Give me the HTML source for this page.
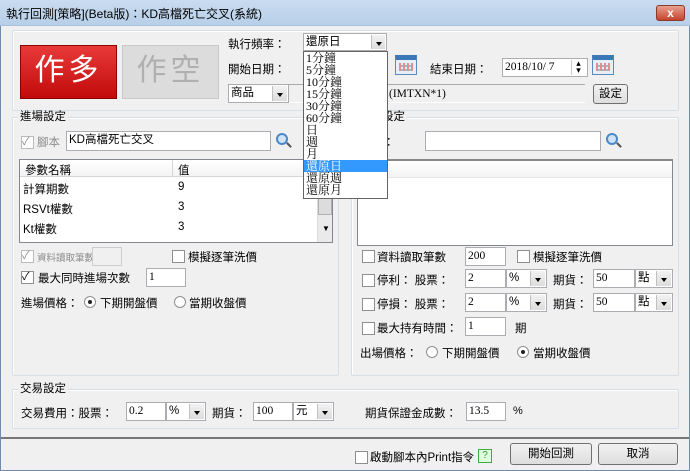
<!DOCTYPE html>
<html><head><meta charset="utf-8">
<style>
*{box-sizing:border-box;margin:0;padding:0}
body{width:690px;height:471px;overflow:hidden;background:#f0f0f0;font-family:"Liberation Sans","Noto Sans CJK TC",sans-serif;font-size:11.5px;color:#000;position:relative}
.a{position:absolute;white-space:nowrap}
.title{left:0;top:0;width:690px;height:26px;background:linear-gradient(#c9dcf0,#b7cfe8);border-bottom:1px solid #a8c0da}
.win{left:0;top:0;width:690px;height:471px;border:1px solid #6d8db0;border-top:none}
.grp{border:1px solid #d5dfe5;border-radius:2px;box-shadow:inset 1px 1px 0 #fff}
.gl{background:#f0f0f0;padding:0 2px;line-height:12px}
.in{background:#fff;border:1px solid #abadb3;height:19px;line-height:17px;padding-left:2px}
.cb{width:13px;height:13px;border:1px solid #8e8f8f;background:#fff}
.dd{position:absolute;right:1px;top:1px;width:15px;bottom:1px;background:linear-gradient(#f2f2f2,#dcdcdc);border-left:1px solid #c0c0c0}
.dd:after{content:"";position:absolute;left:4px;top:7px;border:3.5px solid transparent;border-top:4px solid #000}
.btn{border:1px solid #707070;border-radius:3px;background:linear-gradient(#f2f2f2,#dddddd);text-align:center}
.cal{width:22px;height:20px;background:#e8eef6;border:1px solid #5a8bc0;border-top:5px solid #3a78b8}
.cal:after{content:"";position:absolute;left:3px;top:3px;width:14px;height:8px;background:repeating-linear-gradient(90deg,#d66 0 2px,transparent 2px 4px),repeating-linear-gradient(0deg,#7ab 0 2px,transparent 2px 4px);opacity:.7}
.mag{width:12px;height:12px;border:2px solid #4a88c8;border-radius:50%;background:#cfe3f5}
.mag:after{content:"";position:absolute;left:8px;top:9px;width:6px;height:2px;background:#555;transform:rotate(45deg)}
.rd{width:12px;height:12px;border-radius:50%;border:1px solid #8e8f8f;background:#fff}
.rd.on:after{content:"";position:absolute;left:3px;top:3px;width:4px;height:4px;border-radius:50%;background:#222}
.gray{color:#8d8d8d}
</style></head><body>
<div class="a win"></div>
<div class="a title"></div>
<div class="a" style="left:6px;top:5px;font-size:12px">執行回測[策略](Beta版)：KD高檔死亡交叉(系統)</div>
<div class="a" style="left:656px;top:5px;width:29px;height:16px;border-radius:3px;background:linear-gradient(#e8a090,#c5442c);border:1px solid #8a3a2a;color:#fff;font-weight:bold;text-align:center;line-height:14px;font-size:12px">x</div>

<div class="a grp" style="left:12px;top:30px;width:667px;height:81px"></div>
<div class="a" style="left:20px;top:45px;width:97px;height:54px;background:linear-gradient(#e83a3a,#c20a0a);border:1px solid #8a0000;color:#fff;font-size:30px;line-height:50px;text-align:center;letter-spacing:4px">作多</div>
<div class="a" style="left:122px;top:45px;width:97px;height:54px;background:#dcdcdc;border:1px solid #c8c8c8;color:#b0b0b0;font-size:30px;line-height:50px;text-align:center;letter-spacing:4px">作空</div>
<div class="a" style="left:228px;top:36px">執行頻率：</div>
<div class="a in" style="left:303px;top:33px;width:84px;height:18px;line-height:16px">還原日<div class="dd" style="width:14px"></div></div>
<div class="a" style="left:228px;top:61px">開始日期：</div>
<div class="a cal" style="left:395px;top:55px"></div>
<div class="a" style="left:430px;top:61px">結束日期：</div>
<div class="a in" style="left:502px;top:58px;width:86px;font-family:'Liberation Serif',serif">2018/10/ 7<div class="a" style="right:2px;top:1px;width:14px;height:15px;border-left:1px solid #ccc;text-align:center;font-size:9px;line-height:7px">▴<br>▾</div></div>
<div class="a cal" style="left:592px;top:55px"></div>
<div class="a in" style="left:228px;top:84px;width:61px;height:19px;line-height:17px">商品<div class="dd"></div></div>
<div class="a" style="left:289px;top:84px;width:296px;height:19px;border-top:1px solid #aaa;border-bottom:1px solid #fff;padding-left:100px;line-height:18px;font-family:'Liberation Serif',serif">(IMTXN*1)</div>
<div class="a btn" style="left:593px;top:84px;width:35px;height:20px;line-height:18px">設定</div>

<div class="a grp" style="left:12px;top:117px;width:327px;height:259px"></div>
<div class="a gl" style="left:18px;top:111px">進場設定</div>
<div class="a cb" style="left:21px;top:136px;border-color:#bbb"></div><div class="a gray" style="left:22px;top:133px;font-size:11px">✓</div>
<div class="a gray" style="left:37px;top:134px">腳本</div>
<div class="a in" style="left:66px;top:131px;width:205px;height:20px">KD高檔死亡交叉</div>
<div class="a mag" style="left:276px;top:133px"></div>
<div class="a" style="left:19px;top:159px;width:314px;height:84px;background:#fff;border:1px solid #828790;overflow:hidden">
 <div class="a" style="left:0;top:0;width:297px;height:17px;border-bottom:1px solid #d5d5d5;background:linear-gradient(#fff,#f3f3f3)"></div>
 <div class="a" style="left:152px;top:0;width:1px;height:17px;background:#d5d5d5"></div>
 <div class="a" style="left:5px;top:2px">參數名稱</div><div class="a" style="left:158px;top:2px">值</div>
 <div class="a" style="left:3px;top:21px">計算期數</div><div class="a" style="left:158px;top:21px">9</div>
 <div class="a" style="left:3px;top:41px">RSVt權數</div><div class="a" style="left:158px;top:41px">3</div>
 <div class="a" style="left:3px;top:61px">Kt權數</div><div class="a" style="left:158px;top:61px">3</div>
 <div class="a" style="left:297px;top:0;width:16px;height:84px;background:#eaeaea;border-left:1px solid #ddd"></div>
 <div class="a" style="left:298px;top:25px;width:14px;height:30px;background:#dcdcdc;border:1px solid #b0b0b0"></div>
 <div class="a" style="left:302px;top:64px;font-size:8px">▼</div>
</div>
<div class="a cb" style="left:21px;top:250px;border-color:#bbb"></div><div class="a gray" style="left:22px;top:247px;font-size:11px">✓</div>
<div class="a gray" style="left:37px;top:250px;font-size:9.5px">資料讀取筆數</div>
<div class="a in" style="left:92px;top:247px;width:30px;background:#f0f0f0;border-color:#ccc"></div>
<div class="a cb" style="left:172px;top:250px"></div><div class="a" style="left:188px;top:249px">模擬逐筆洗價</div>
<div class="a cb" style="left:21px;top:271px"></div><div class="a" style="left:22px;top:268px;font-size:11px">✓</div>
<div class="a" style="left:38px;top:270px">最大同時進場次數</div>
<div class="a in" style="left:146px;top:268px;width:40px;font-family:'Liberation Serif',serif">1</div>
<div class="a" style="left:21px;top:295px">進場價格：</div>
<div class="a rd on" style="left:84px;top:296px"></div><div class="a" style="left:100px;top:295px">下期開盤價</div>
<div class="a rd" style="left:174px;top:296px"></div><div class="a" style="left:189px;top:295px">當期收盤價</div>

<div class="a grp" style="left:351px;top:117px;width:328px;height:259px"></div>
<div class="a gl" style="left:357px;top:111px">出場設定</div>
<div class="a" style="left:360px;top:134px">腳本：</div>
<div class="a in" style="left:425px;top:131px;width:176px;height:20px"></div>
<div class="a mag" style="left:606px;top:133px"></div>
<div class="a" style="left:357px;top:159px;width:316px;height:87px;background:#fff;border:1px solid #828790;border-top:2px solid #888">
 <div class="a" style="left:0;top:0;width:314px;height:17px;background:linear-gradient(#fff,#f3f3f3);border-bottom:1px solid #e5e5e5"></div>
</div>
<div class="a cb" style="left:362px;top:250px"></div><div class="a" style="left:377px;top:249px">資料讀取筆數</div>
<div class="a in" style="left:465px;top:247px;width:41px;font-family:'Liberation Serif',serif">200</div>
<div class="a cb" style="left:517px;top:250px"></div><div class="a" style="left:533px;top:249px">模擬逐筆洗價</div>
<div class="a cb" style="left:362px;top:274px"></div><div class="a" style="left:377px;top:272px">停利：&nbsp;股票：</div>
<div class="a in" style="left:465px;top:269px;width:41px;font-family:'Liberation Serif',serif">2</div>
<div class="a in" style="left:506px;top:269px;width:41px">%<div class="dd"></div></div>
<div class="a" style="left:553px;top:272px">期貨：</div>
<div class="a in" style="left:593px;top:269px;width:42px;font-family:'Liberation Serif',serif">50</div>
<div class="a in" style="left:635px;top:269px;width:38px">點<div class="dd"></div></div>
<div class="a cb" style="left:362px;top:298px"></div><div class="a" style="left:377px;top:296px">停損：&nbsp;股票：</div>
<div class="a in" style="left:465px;top:293px;width:41px;font-family:'Liberation Serif',serif">2</div>
<div class="a in" style="left:506px;top:293px;width:41px">%<div class="dd"></div></div>
<div class="a" style="left:553px;top:296px">期貨：</div>
<div class="a in" style="left:593px;top:293px;width:42px;font-family:'Liberation Serif',serif">50</div>
<div class="a in" style="left:635px;top:293px;width:38px">點<div class="dd"></div></div>
<div class="a cb" style="left:362px;top:322px"></div><div class="a" style="left:377px;top:320px">最大持有時間：</div>
<div class="a in" style="left:465px;top:317px;width:41px;font-family:'Liberation Serif',serif">1</div>
<div class="a" style="left:515px;top:320px">期</div>
<div class="a" style="left:360px;top:345px">出場價格：</div>
<div class="a rd" style="left:426px;top:346px"></div><div class="a" style="left:442px;top:345px">下期開盤價</div>
<div class="a rd on" style="left:517px;top:346px"></div><div class="a" style="left:533px;top:345px">當期收盤價</div>

<div class="a grp" style="left:12px;top:389px;width:667px;height:40px"></div>
<div class="a gl" style="left:18px;top:383px">交易設定</div>
<div class="a" style="left:21px;top:405px">交易費用：股票：</div>
<div class="a in" style="left:126px;top:402px;width:40px;font-family:'Liberation Serif',serif">0.2</div>
<div class="a in" style="left:166px;top:402px;width:40px">%<div class="dd"></div></div>
<div class="a" style="left:212px;top:405px">期貨：</div>
<div class="a in" style="left:253px;top:402px;width:40px;font-family:'Liberation Serif',serif">100</div>
<div class="a in" style="left:293px;top:402px;width:41px">元<div class="dd"></div></div>
<div class="a" style="left:365px;top:405px">期貨保證金成數：</div>
<div class="a in" style="left:466px;top:402px;width:40px;font-family:'Liberation Serif',serif">13.5</div>
<div class="a" style="left:513px;top:405px;font-size:11px">%</div>

<div class="a" style="left:1px;top:437px;width:688px;height:2px;background:#777"></div>
<div class="a cb" style="left:355px;top:451px"></div>
<div class="a" style="left:370px;top:449px">啟動腳本內Print指令</div>
<div class="a" style="left:478px;top:449px;width:14px;height:14px;border:1px solid #4a4;background:#dfd;color:#393;font-size:10px;text-align:center;line-height:12px">?</div>
<div class="a btn" style="left:510px;top:443px;width:82px;height:22px;line-height:20px">開始回測</div>
<div class="a btn" style="left:598px;top:443px;width:80px;height:22px;line-height:20px">取消</div>

<div class="a" style="left:303px;top:51px;width:85px;height:148px;background:#fff;border:1px solid #646464;font-family:'Liberation Serif','Noto Serif CJK SC',serif;font-size:12px;line-height:12px">
<div style="padding-left:2px">1分鐘</div><div style="padding-left:2px">5分鐘</div><div style="padding-left:2px">10分鐘</div><div style="padding-left:2px">15分鐘</div><div style="padding-left:2px">30分鐘</div><div style="padding-left:2px">60分鐘</div><div style="padding-left:2px">日</div><div style="padding-left:2px">週</div><div style="padding-left:2px">月</div><div style="padding-left:2px;background:#3399ff;color:#fff">還原日</div><div style="padding-left:2px">還原週</div><div style="padding-left:2px">還原月</div>
</div>
</body></html>
